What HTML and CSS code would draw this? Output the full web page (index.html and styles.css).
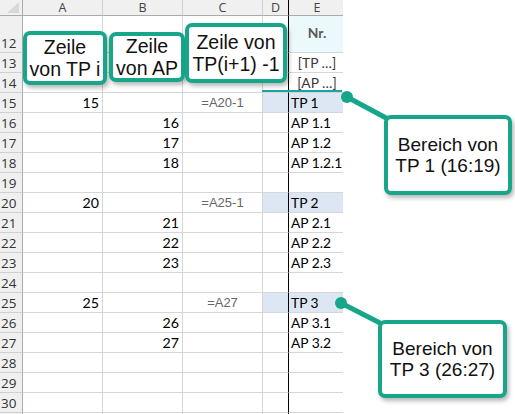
FILE: index.html
```html
<!DOCTYPE html>
<html lang="de">
<head>
<meta charset="utf-8">
<link rel="stylesheet" href="styles.css">
</head>
<body>
<div class="page">
  <div class="sheet">
    <div class="row hdr">
      <div class="c rh corner"><span class="tri"></span></div>
      <div class="c ch">A</div><div class="c ch">B</div><div class="c ch">C</div><div class="c ch d">D</div><div class="c ch e">E</div>
    </div>
    <div class="row tall">
      <div class="c rh">12</div><div class="c"></div><div class="c"></div><div class="c"></div><div class="c d"></div><div class="c e nr">Nr.</div>
    </div>
    <div class="row"><div class="c rh">13</div><div class="c"></div><div class="c"></div><div class="c"></div><div class="c d"></div><div class="c e ph">[TP …]</div></div>
    <div class="row"><div class="c rh">14</div><div class="c"></div><div class="c"></div><div class="c"></div><div class="c d"></div><div class="c e ph">[AP …]</div></div>
    <div class="row"><div class="c rh">15</div><div class="c num">15</div><div class="c"></div><div class="c fx">=A20-1</div><div class="c d hl"></div><div class="c e hl">TP 1</div></div>
    <div class="row"><div class="c rh">16</div><div class="c"></div><div class="c num">16</div><div class="c"></div><div class="c d"></div><div class="c e">AP 1.1</div></div>
    <div class="row"><div class="c rh">17</div><div class="c"></div><div class="c num">17</div><div class="c"></div><div class="c d"></div><div class="c e">AP 1.2</div></div>
    <div class="row"><div class="c rh">18</div><div class="c"></div><div class="c num">18</div><div class="c"></div><div class="c d"></div><div class="c e">AP 1.2.1</div></div>
    <div class="row"><div class="c rh">19</div><div class="c"></div><div class="c"></div><div class="c"></div><div class="c d"></div><div class="c e"></div></div>
    <div class="row"><div class="c rh">20</div><div class="c num">20</div><div class="c"></div><div class="c fx">=A25-1</div><div class="c d hl"></div><div class="c e hl">TP 2</div></div>
    <div class="row"><div class="c rh">21</div><div class="c"></div><div class="c num">21</div><div class="c"></div><div class="c d"></div><div class="c e">AP 2.1</div></div>
    <div class="row"><div class="c rh">22</div><div class="c"></div><div class="c num">22</div><div class="c"></div><div class="c d"></div><div class="c e">AP 2.2</div></div>
    <div class="row"><div class="c rh">23</div><div class="c"></div><div class="c num">23</div><div class="c"></div><div class="c d"></div><div class="c e">AP 2.3</div></div>
    <div class="row"><div class="c rh">24</div><div class="c"></div><div class="c"></div><div class="c"></div><div class="c d"></div><div class="c e"></div></div>
    <div class="row"><div class="c rh">25</div><div class="c num">25</div><div class="c"></div><div class="c fx">=A27</div><div class="c d hl"></div><div class="c e hl">TP 3</div></div>
    <div class="row"><div class="c rh">26</div><div class="c"></div><div class="c num">26</div><div class="c"></div><div class="c d"></div><div class="c e">AP 3.1</div></div>
    <div class="row"><div class="c rh">27</div><div class="c"></div><div class="c num">27</div><div class="c"></div><div class="c d"></div><div class="c e">AP 3.2</div></div>
    <div class="row"><div class="c rh">28</div><div class="c"></div><div class="c"></div><div class="c"></div><div class="c d"></div><div class="c e"></div></div>
    <div class="row"><div class="c rh">29</div><div class="c"></div><div class="c"></div><div class="c"></div><div class="c d"></div><div class="c e"></div></div>
    <div class="row"><div class="c rh">30</div><div class="c"></div><div class="c"></div><div class="c"></div><div class="c d"></div><div class="c e"></div></div>
    <div class="row"><div class="c rh"></div><div class="c"></div><div class="c"></div><div class="c"></div><div class="c d"></div><div class="c e"></div></div>
  </div>

  <div class="underline"></div>

  <div class="box box1">Zeile<br>von TP i</div>
  <div class="box box2">Zeile<br>von AP</div>
  <div class="box box3">Zeile von<br>TP(i+1) -1</div>

  <svg class="connectors" width="515" height="414" viewBox="0 0 515 414">
    <g fill="none" stroke="#17a689" stroke-width="5" stroke-linecap="round">
      <line x1="347" y1="97" x2="388" y2="119"/>
      <line x1="341" y1="303" x2="382" y2="324"/>
    </g>
    <circle cx="347" cy="97" r="6" fill="#17a689"/>
    <circle cx="341" cy="303" r="6" fill="#17a689"/>
  </svg>

  <div class="box call1">Bereich von<br>TP 1 (16:19)</div>
  <div class="box call2">Bereich von<br>TP 3 (26:27)</div>
</div>
</body>
</html>
```

FILE: styles.css
```css
* { box-sizing: border-box; }
html, body { margin: 0; padding: 0; background: #fff; }
.page {
  position: relative;
  width: 515px;
  height: 414px;
  overflow: hidden;
  font-family: "Lato", "Open Sans", sans-serif;
}
.sheet { display: flex; flex-direction: column; }
.row {
  display: grid;
  grid-template-columns: 23px 80px 80px 80px 26px 54px;
  height: 20px;
}
.row.hdr { height: 16px; }
.row.tall { height: 37px; }
.c {
  border-right: 1px solid #d6d6d6;
  border-bottom: 1px solid #d6d6d6;
  font-size: 14.2px;
  color: #000;
  display: flex;
  align-items: flex-end;
  white-space: nowrap;
  line-height: 18px;
}
.c.d { border-right: 1px solid #000; }
.c.e { border-right: none; overflow: visible; padding-left: 2px; font-size: 13.8px; }
.rh {
  background: #f0f0f0;
  border-right: 1px solid #ababab;
  border-bottom: 1px solid #d0d0d0;
  font-family: "Open Sans", sans-serif;
  font-size: 13.5px;
  color: #333;
  padding-left: 1px;
}
.hdr .c {
  background: #f0f0f0;
  border-bottom: 1px solid #ababab;
  border-right-color: #d0d0d0;
  font-family: "Open Sans", sans-serif;
  font-size: 12.5px;
  color: #444;
  justify-content: center;
  align-items: center;
  line-height: 15px;
}
.hdr .c.rh { border-right-color: #ababab; position: relative; }
.hdr .c.d { border-right-color: #000; }
.tri {
  position: absolute;
  right: 3px;
  bottom: 2px;
  width: 0; height: 0;
  border-left: 12px solid transparent;
  border-bottom: 11px solid #d8d8d8;
}
.num { justify-content: flex-end; padding-right: 3px; }
.fx {
  justify-content: center;
  font-family: "Liberation Sans", Arial, sans-serif;
  font-size: 13px;
  color: #666;
  align-items: center;
  padding-top: 1px;
}
.hl { background: #dde7f3; }
.nr {
  background: #ebf8fc;
  justify-content: center;
  align-items: center;
  font-weight: 700;
  color: #595959;
  padding: 0 0 2px 0;
}
.ph { justify-content: center; padding-left: 0; color: #3b3535; }

.underline {
  position: absolute;
  left: 262px;
  top: 90px;
  width: 80px;
  height: 2px;
  background: #17a6a0;
}

.box {
  position: absolute;
  background: #fff;
  border: 4px solid #17a689;
  border-radius: 7px;
  box-shadow: 2px 3px 4px rgba(0,0,0,0.28);
  font-family: "Liberation Sans", Arial, sans-serif;
  font-size: 19.5px;
  line-height: 22px;
  color: #111;
  text-align: center;
  display: flex;
  align-items: center;
  justify-content: center;
}
.box1 { left: 23px; top: 31px; width: 84px; height: 54px; }
.box2 { left: 109px; top: 32px; width: 76px; height: 50px; }
.box3 { left: 185px; top: 23px; width: 102px; height: 60px; }
.call1 { left: 384px; top: 115px; width: 128px; height: 80px; font-size: 19px; line-height: 21px; }
.call2 { left: 378px; top: 320px; width: 129px; height: 78px; font-size: 19px; line-height: 21px; }

.connectors { position: absolute; left: 0; top: 0; }
```
